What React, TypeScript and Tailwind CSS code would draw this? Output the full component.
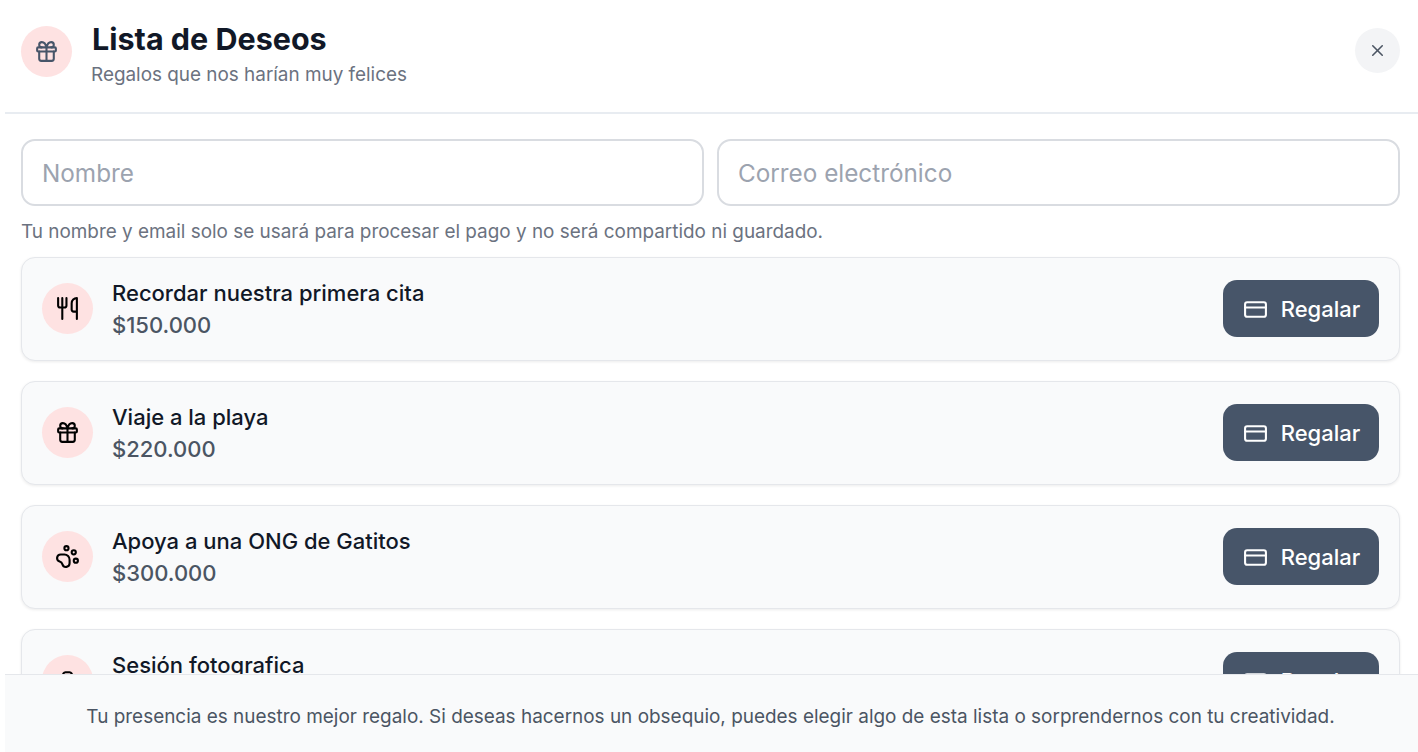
import { Camera, CreditCard, Gift, PawPrint, Utensils, X } from "lucide-react";
import type { LucideIcon } from "lucide-react";

type Wish = {
  title: string;
  price: string;
  icon: LucideIcon;
};

const wishes: Wish[] = [
  { title: "Recordar nuestra primera cita", price: "$150.000", icon: Utensils },
  { title: "Viaje a la playa", price: "$220.000", icon: Gift },
  { title: "Apoya a una ONG de Gatitos", price: "$300.000", icon: PawPrint },
  { title: "Sesión fotografica", price: "$400.000", icon: Camera },
];

function WishCard({ title, price, icon: Icon }: Wish) {
  return (
    <div className="flex h-[104px] shrink-0 items-center justify-between rounded-[14px] border border-[#e5e7eb] bg-[#f9fafb] pl-5 pr-5 shadow-[0_1px_3px_rgba(0,0,0,0.08)]">
      <div className="flex items-center gap-[19px]">
        <div className="flex h-[51px] w-[51px] items-center justify-center rounded-full bg-[#fee2e2]">
          <Icon size={25} className="text-black" strokeWidth={2} />
        </div>
        <div className="flex flex-col">
          <span className="text-[22px] leading-[32px] font-medium text-[#111827]">{title}</span>
          <span className="text-[22px] leading-[32px] font-medium text-[#4b5563]">{price}</span>
        </div>
      </div>
      <button className="flex h-[57px] w-[156px] items-center justify-center gap-[13px] rounded-[14px] bg-[#475569] pl-px pt-px text-[22px] font-medium text-white">
        <CreditCard size={25} strokeWidth={2} />
        Regalar
      </button>
    </div>
  );
}

export default function App() {
  return (
    <div className="flex h-screen flex-col overflow-hidden bg-white pl-[5px] font-['Inter',sans-serif]">
      <div className="flex h-[114px] shrink-0 items-start justify-between border-b-2 border-[#e8ecf1] pl-4 pr-[18px] pt-[21px]">
        <div className="flex items-start gap-[19px]">
          <div className="mt-[5px] flex h-[51px] w-[51px] items-center justify-center rounded-full bg-[#fee2e2]">
            <Gift size={25} className="text-[#475569]" strokeWidth={2} />
          </div>
          <div className="flex flex-col">
            <h1 className="ml-px text-[30.5px] leading-[36px] font-bold text-[#111827]">Lista de Deseos</h1>
            <p className="mt-[4px] text-[18.9px] leading-[28px] text-[#6b7280]">Regalos que nos harían muy felices</p>
          </div>
        </div>
        <button className="mt-[7px] flex h-[45px] w-[45px] items-center justify-center rounded-full bg-[#f3f4f6] text-[#4b5563]">
          <X size={19} />
        </button>
      </div>

      <div className="flex min-h-0 flex-1 flex-col overflow-hidden pl-4 pr-[18px] pt-[25px]">
        <div className="flex gap-[13px]">
          <input
            placeholder="Nombre"
            className="h-[67px] w-full min-w-0 rounded-[14px] border-2 border-[#d9dce1] px-[19px] text-[24.3px] placeholder:text-[#9ca3af]"
          />
          <input
            placeholder="Correo electrónico"
            className="h-[67px] w-full min-w-0 rounded-[14px] border-2 border-[#d9dce1] px-[19px] text-[24.3px] placeholder:text-[#9ca3af]"
          />
        </div>
        <p className="mt-[12px] text-[18.92px] leading-[28px] text-[#6b7280]">
          Tu nombre y email solo se usará para procesar el pago y no será compartido ni guardado.
        </p>
        <div className="mt-[10.5px] flex flex-col gap-5">
          {wishes.map((wish) => (
            <WishCard key={wish.title} {...wish} />
          ))}
        </div>
      </div>

      <div className="flex h-[78px] shrink-0 items-center justify-center border-t border-[#e5e7eb] bg-[#f9fafb] pr-[2px] pt-2 text-[18.95px] text-[#4b5563]">
        Tu presencia es nuestro mejor regalo. Si deseas hacernos un obsequio, puedes elegir algo de esta lista o sorprendernos con tu creatividad.
      </div>
    </div>
  );
}
